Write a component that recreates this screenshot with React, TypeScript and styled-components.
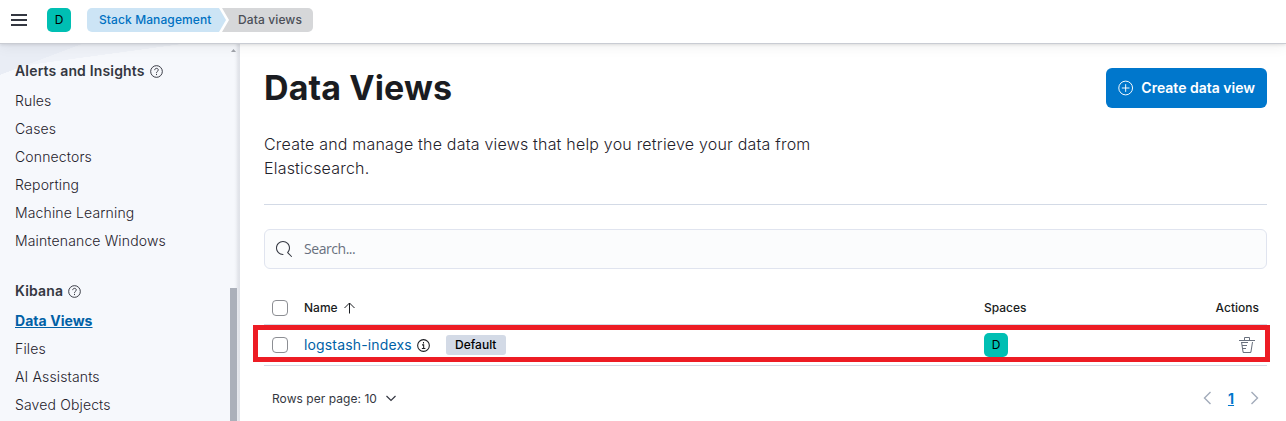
import React from 'react';
import styled, { createGlobalStyle } from 'styled-components';

const GlobalStyle = createGlobalStyle`
  * { box-sizing: border-box; }
  body {
    margin: 0;
    overflow: hidden;
    background: #fff;
    color: #343741;
    font-family: Inter, "Liberation Sans", sans-serif;
    font-size: 14px;
  }
`;

const Page = styled.div`
  height: 421px;
  display: flex;
  flex-direction: column;
`;

const Header = styled.header`
  flex: none;
  height: 43px;
  display: flex;
  align-items: center;
  padding: 0 11px;
  padding-bottom: 3px;
  background: #fff;
  position: relative;
  z-index: 1;
  box-shadow: 0 1px 0 #c9ccd3, 0 2px 3px rgba(0, 0, 0, 0.1), 0 5px 12px rgba(0, 0, 0, 0.05);
`;

const MenuIcon = styled.svg`
  width: 16px;
  height: 12px;
  margin-right: 20px;
`;

const Avatar = styled.span`
  display: flex;
  align-items: center;
  justify-content: center;
  width: 24px;
  height: 24px;
  padding-bottom: 1px;
  border-radius: 5px;
  background: #00bfb3;
  color: #000;
  font-size: 12px;
  font-weight: 400;
`;

const Breadcrumbs = styled.nav`
  display: flex;
  margin-left: 16px;
`;

const Crumb = styled.span<{ $last?: boolean }>`
  width: ${p => (p.$last ? 91 : 139)}px;
  height: 24px;
  line-height: 24px;
  font-size: 12px;
  font-weight: ${p => (p.$last ? 450 : 450)};
  letter-spacing: ${p => (p.$last ? 0.12 : 0.1)}px;
  white-space: nowrap;
  padding-left: ${p => (p.$last ? 16 : 12)}px;
  margin-left: ${p => (p.$last ? -4 : 0)}px;
  color: ${p => (p.$last ? '#4b4e57' : '#0071c2')};
  background: ${p => (p.$last ? '#d6d7d9' : '#cce4f5')};
  border-radius: ${p => (p.$last ? '0 5px 5px 0' : '5px 0 0 5px')};
  clip-path: ${p =>
    p.$last
      ? 'polygon(0 0, 100% 0, 100% 100%, 0 100%, 7px 50%)'
      : 'polygon(0 0, 132px 0, 100% 50%, 132px 100%, 0 100%)'};
`;

const Body = styled.div`
  flex: 1;
  min-height: 0;
  display: flex;
`;

const Sidebar = styled.aside`
  width: 240px;
  flex: none;
  display: flex;
  justify-content: space-between;
  overflow: hidden;
  background:
    linear-gradient(to right, transparent 234px, rgba(60, 65, 85, 0.03) 236px, rgba(60, 65, 85, 0.1) 238px, rgba(60, 65, 85, 0.12) 240px),
    linear-gradient(to bottom right, #e9edf5 49.5%, transparent 50%) 0 0 / 85px 32px no-repeat,
    linear-gradient(to bottom right, #eff2f8 49.5%, transparent 50%) 0 0 / 190px 26px no-repeat,
    #f6f8fc;
`;

const NavList = styled.div`
  padding: 14px 0 0 15px;
`;

const NavHeading = styled.div`
  display: flex;
  align-items: center;
  gap: 5px;
  height: 28px;
  margin-bottom: 2px;
  padding-bottom: 1px;
  font-size: 14px;
  font-weight: 600;
  letter-spacing: 0.17px;
  white-space: nowrap;
  svg { position: relative; top: 1px; }
`;

const NavItem = styled.a<{ $active?: boolean }>`
  display: block;
  height: 28px;
  line-height: 28px;
  white-space: nowrap;
  letter-spacing: ${p => (p.$active ? 0.05 : 0.14)}px;
  font-weight: ${p => (p.$active ? 700 : 300)};
  color: ${p => (p.$active ? '#0061a6' : '#1f222b')};
  text-decoration: ${p => (p.$active ? 'underline' : 'none')};
`;

const NavGroup = styled.div`
  margin-bottom: 22px;
`;

const Scrollbar = styled.div`
  width: 10px;
  display: flex;
  flex-direction: column;
  justify-content: space-between;
  svg { width: 7px; height: 13px; }
`;

const Thumb = styled.div`
  width: 7px;
  height: 133px;
  background: #abb0ba;
`;

const Main = styled.main`
  flex: 1;
  padding: 25px 19px 0 24px;
`;

const TitleRow = styled.div`
  display: flex;
  justify-content: space-between;
  height: 40px;
`;

const Title = styled.h1`
  margin: 0;
  font-size: 34px;
  line-height: 40px;
  font-weight: 700;
  letter-spacing: 0.1px;
  color: #1a1c21;
`;

const CreateButton = styled.button`
  width: 161px;
  height: 40px;
  display: flex;
  align-items: center;
  gap: 8px;
  padding: 0 12px 1px;
  border: 0;
  border-radius: 6px;
  background: #0077cc;
  color: #fff;
  font: 600 14px Inter, sans-serif;
  white-space: nowrap;
`;

const Description = styled.p`
  margin: 24px 0 0;
  width: 600px;
  height: 72px;
  font-size: 16px;
  line-height: 24px;
  font-weight: 300;
  letter-spacing: 0.2px;
  color: #1f222b;
`;

const Rule = styled.div`
  height: 1px;
  background: #d3dae6;
`;

const SearchBox = styled.div`
  margin-top: 24px;
  height: 40px;
  display: flex;
  align-items: center;
  gap: 12px;
  padding-left: 11px;
  padding-bottom: 1px;
  border: 1px solid #e0e4ef;
  border-radius: 6px;
  background: #fbfcfd;
  color: #69707d;
  font-family: "Open Sans", sans-serif;
  font-size: 14px;
  letter-spacing: -0.45px;
`;

const Row = styled.div<{ $head?: boolean }>`
  display: grid;
  grid-template-columns: 40px 680px 1fr auto;
  align-items: center;
  height: ${p => (p.$head ? 34 : 41)}px;
  border-bottom: 1px solid #d3dae6;
  font-size: ${p => (p.$head ? 12 : 14)}px;
  font-weight: ${p => (p.$head ? 550 : 400)};
  color: #1a1c21;
  white-space: nowrap;
`;

const Checkbox = styled.span`
  width: 16px;
  height: 16px;
  margin-left: 8px;
  border: 1px solid #8c8e93;
  border-radius: 4px;
  background: #fff;
`;

const NameCell = styled.div<{ $gap?: number }>`
  display: flex;
  align-items: center;
  gap: ${p => p.$gap || 0}px;
`;

const ViewLink = styled.a`
  color: #0061a6;
  letter-spacing: 0.15px;
  margin-right: 5px;
  padding-bottom: 2px;
`;

const Badge = styled.span`
  width: 60px;
  height: 20px;
  margin-left: 16px;
  border-radius: 3px;
  background: #d3dae6;
  color: #000;
  font-size: 12px;
  font-weight: 450;
  line-height: 19px;
  text-align: center;
`;

const ActionCell = styled.div<{ $pad: number }>`
  padding-right: ${p => p.$pad}px;
  display: flex;
`;

const TableWrap = styled.div`
  position: relative;
  margin-top: 22px;
`;

const Highlight = styled.div`
  position: absolute;
  left: -11px;
  right: -3px;
  top: 34px;
  height: 37px;
  border: 5px solid #ed1c24;
`;

const Footer = styled.div`
  display: flex;
  justify-content: space-between;
  align-items: center;
  height: 24px;
  margin-top: 20px;
  padding: 0 8px;
  font-size: 12px;
  letter-spacing: 0.05px;
`;

const FooterPart = styled.div<{ $gap: number }>`
  display: flex;
  align-items: center;
  gap: ${p => p.$gap}px;
`;

const PageNumber = styled.a`
  width: 8px;
  color: #0077cc;
  font-size: 14px;
  font-weight: 700;
  text-align: center;
  text-decoration: underline;
`;

const HelpIcon = () => (
  <svg width="13" height="13" viewBox="0 0 16 16" fill="none" stroke="#343741" strokeWidth="1.2">
    <circle cx="8" cy="8" r="7.2" />
    <path d="M5.800 6.300c0-1.300 1-2.200 2.200-2.200s2.200.8 2.200 2c0 1.700-2.200 1.800-2.200 3.500" />
    <path d="M8 10.900v1.500" />
  </svg>
);

const InfoIcon = () => (
  <svg width="13" height="13" viewBox="0 0 16 16" fill="none" stroke="#1a1c21" strokeWidth="1.3">
    <circle cx="8" cy="8" r="7.2" />
    <path d="M6.200 7.200h2v4.500M6 11.800h4.300M8 3.800v1.700" />
  </svg>
);

const groups = [
  { title: 'Alerts and Insights', items: ['Rules', 'Cases', 'Connectors', 'Reporting', 'Machine Learning', 'Maintenance Windows'] },
  { title: 'Kibana', items: ['Data Views', 'Files', 'AI Assistants', 'Saved Objects'] },
];

export default function App() {
  return (
    <Page>
      <GlobalStyle />
      <Header>
        <MenuIcon viewBox="0 0 16 12" fill="#343741">
          <path d="M0 0h16v2H0zM0 5h16v2H0zM0 10h16v2H0z" />
        </MenuIcon>
        <Avatar>D</Avatar>
        <Breadcrumbs>
          <Crumb>Stack Management</Crumb>
          <Crumb $last>Data views</Crumb>
        </Breadcrumbs>
      </Header>
      <Body>
        <Sidebar>
          <NavList>
            {groups.map(g => (
              <NavGroup key={g.title}>
                <NavHeading>{g.title}<HelpIcon /></NavHeading>
                {g.items.map(i => <NavItem key={i} $active={i === 'Data Views'}>{i}</NavItem>)}
              </NavGroup>
            ))}
          </NavList>
          <Scrollbar>
            <svg viewBox="0 0 7 13"><path d="M1 9l2.500-3L6 9z" fill="#a0a3aa" /></svg>
            <Thumb />
          </Scrollbar>
        </Sidebar>
        <Main>
          <TitleRow>
            <Title>Data Views</Title>
            <CreateButton>
              <svg width="16" height="16" viewBox="0 0 16 16" fill="none" stroke="#fff">
                <circle cx="8" cy="8" r="7.200" /><path d="M8 4v8M4 8h8" />
              </svg>
              Create data view
            </CreateButton>
          </TitleRow>
          <Description>
            Create and manage the data views that help you retrieve your data from Elasticsearch.
          </Description>
          <Rule />
          <SearchBox>
            <svg width="16" height="16" viewBox="0 0 16 16" fill="#343741">
              <path d="M11.271 11.978l3.872 3.873a.502.502 0 00.708 0 .502.502 0 000-.708l-3.565-3.564c2.380-2.747 2.267-6.923-.342-9.532-2.730-2.730-7.170-2.730-9.898 0-2.728 2.729-2.728 7.170 0 9.900a6.955 6.955 0 004.949 2.050.5.5 0 000-1 5.960 5.960 0 01-4.242-1.757 6.010 6.010 0 010-8.486 6.004 6.004 0 018.484 0 6.010 6.010 0 010 8.486.5.5 0 00.034.738z" />
            </svg>
            Search...
          </SearchBox>
          <TableWrap>
            <Row $head>
              <Checkbox />
              <NameCell $gap={6}>
                Name
                <svg width="12" height="12" viewBox="0 0 12 12" fill="none" stroke="#1a1c21">
                  <path d="M5.500 11.500V1M.5 6l5-5 5 5" />
                </svg>
              </NameCell>
              <span>Spaces</span>
              <ActionCell $pad={8}>Actions</ActionCell>
            </Row>
            <Row>
              <Checkbox />
              <NameCell>
                <ViewLink>logstash-indexs</ViewLink>
                <InfoIcon />
                <Badge>Default</Badge>
              </NameCell>
              <Avatar>D</Avatar>
              <ActionCell $pad={12}>
                <svg width="16" height="16" viewBox="0 0 16 16" fill="#69707d">
                  <path d="M11 3h5v1H0V3h5V1a1 1 0 0 1 1-1h4a1 1 0 0 1 1 1v2zm-7.056 8H7v1H4.100l.392 2.519c.042.269.254.458.493.458h6.030c.239 0 .451-.189.493-.458l1.498-9.576H14l-1.504 9.730c-.116.747-.740 1.304-1.481 1.304h-6.030c-.741 0-1.365-.557-1.481-1.304l-1.511-9.730H9V5.950H3.157L3.476 8H8v1H3.632l.312 2zM6 3h4V1H6v2z" />
                </svg>
              </ActionCell>
            </Row>
            <Highlight />
          </TableWrap>
          <Footer>
            <FooterPart $gap={8}>
              Rows per page: 10
              <svg width="12" height="12" viewBox="0 0 12 12" fill="none" stroke="#343741" strokeWidth="1.200">
                <path d="M1.500 4L6 8.500 10.500 4" />
              </svg>
            </FooterPart>
            <FooterPart $gap={15}>
              <svg width="9" height="14" viewBox="0 0 9 14" fill="none" stroke="#a2abba" strokeWidth="1.400">
                <path d="M7.500 1L1.500 7l6 6" />
              </svg>
              <PageNumber>1</PageNumber>
              <svg width="9" height="14" viewBox="0 0 9 14" fill="none" stroke="#a2abba" strokeWidth="1.400">
                <path d="M1.500 1l6 6-6 6" />
              </svg>
            </FooterPart>
          </Footer>
        </Main>
      </Body>
    </Page>
  );
}
